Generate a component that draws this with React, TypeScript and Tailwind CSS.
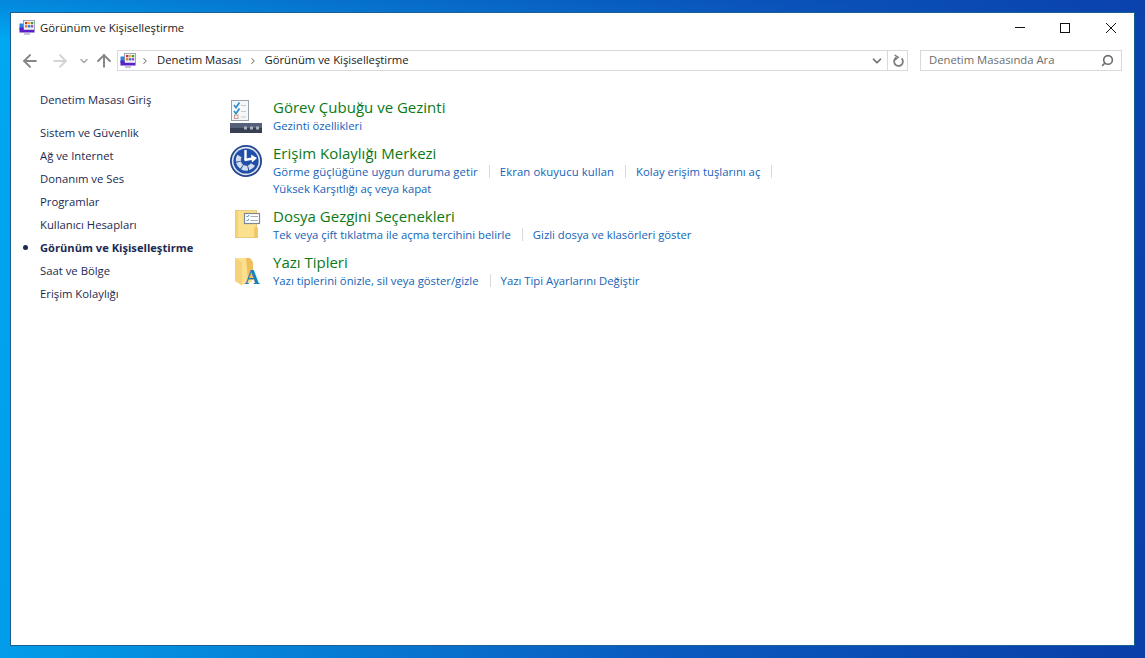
import { ArrowLeft, ArrowRight, ArrowUp, ChevronDown, ChevronRight, Search } from 'lucide-react'

const sideLinks = [
  'Sistem ve Güvenlik',
  'Ağ ve Internet',
  'Donanım ve Ses',
  'Programlar',
  'Kullanıcı Hesapları',
  'Görünüm ve Kişiselleştirme',
  'Saat ve Bölge',
  'Erişim Kolaylığı',
]

const PanelIcon = () => (
  <svg width="16" height="16" viewBox="0 0 16 16" className="shrink-0">
    <path d="M0.5 3.5 H6 V10 H0.5 Z" fill="#2a7fe0" />
    <rect x="4.5" y="0.5" width="11" height="9.5" fill="#eef1f6" stroke="#7a86a0" strokeWidth="0.7" />
    <rect x="6" y="2" width="2.4" height="2.2" fill="#d2302a" />
    <rect x="9" y="2" width="2.4" height="2.2" fill="#e8b21c" />
    <rect x="12" y="2" width="2.2" height="2.2" fill="#3f9c35" />
    <rect x="6" y="5.2" width="2.4" height="2.2" fill="#e0702a" />
    <rect x="9" y="5.2" width="2.4" height="2.2" fill="#2f6fd0" />
    <rect x="12" y="5.2" width="2.2" height="2.2" fill="#9a3fc0" />
    <path d="M0.5 7.5 H4.5 V10 H15.5 V12.5 H0.5 Z" fill="#5a1fc8" />
    <rect x="5" y="13.4" width="6" height="1.2" fill="#9aa4b4" />
  </svg>
)

const TaskbarIcon = () => (
  <svg width="34" height="34" viewBox="0 0 34 34">
    <rect x="2.5" y="1.5" width="17" height="20" fill="#f6f7f9" stroke="#9aa3ad" />
    <path d="M5 6 L7 8.5 L10.5 3.5" fill="none" stroke="#2f8fc8" strokeWidth="1.7" />
    <path d="M5 12 L7 14.5 L10.5 9.5" fill="none" stroke="#2f8fc8" strokeWidth="1.7" />
    <rect x="5.5" y="16" width="3.5" height="3.5" fill="none" stroke="#c69a9a" />
    <path d="M12 6.5 H17 M12 12.5 H17 M12 18 H17" stroke="#c4c9cf" />
    <rect x="1" y="24" width="32" height="5" fill="#566079" />
    <rect x="1" y="29" width="32" height="5" fill="#373f52" />
    <rect x="15" y="27.5" width="3" height="3" fill="#aab2be" />
    <rect x="21" y="27.5" width="3" height="3" fill="#aab2be" />
    <rect x="27" y="27.5" width="3" height="3" fill="#aab2be" />
  </svg>
)

const AccessIcon = () => (
  <svg width="34" height="34" viewBox="0 0 34 34">
    <circle cx="17" cy="16" r="16" fill="#24458f" />
    <circle cx="17" cy="16" r="14.2" fill="#dfe5ef" />
    <circle cx="17" cy="16" r="12.6" fill="#1f4fa8" />
    <path d="M24 19.5 A7.8 7.8 0 1 1 10.5 11" fill="none" stroke="#d5ddea" strokeWidth="5" strokeDasharray="5.5 0.9" />
    <path d="M16.5 5 V15" stroke="#fff" strokeWidth="2.4" />
    <path d="M15.5 15 L24 13.5" stroke="#fff" strokeWidth="2.4" />
    <path d="M22 9.5 L28 13 L23 17.5 Z" fill="#fff" />
  </svg>
)

const FolderOptionsIcon = () => (
  <svg width="34" height="34" viewBox="0 0 34 34">
    <rect x="6.5" y="2.5" width="21" height="27" fill="#fbe08e" stroke="#e8cd80" />
    <rect x="7" y="3" width="2" height="26" fill="#f6d273" />
    <path d="M25 20 Q27 17 29 20 V30 H25 Z" fill="#f2c768" />
    <rect x="15.5" y="5.5" width="15" height="10" fill="#fff" stroke="#7f8791" strokeWidth="1.2" />
    <path d="M17.5 8 L18.5 9 L20 7 M17.5 12 L18.5 13 L20 11" fill="none" stroke="#2f8fc8" />
    <path d="M21.5 8.5 H29 M21.5 12.5 H29" stroke="#a8aeb6" />
  </svg>
)

const FontsIcon = () => (
  <svg width="34" height="34" viewBox="0 0 34 34">
    <path d="M6 4 H18 L23 8 V28 L12 31 L6 27 Z" fill="#fbe08e" />
    <path d="M17 4 H21 L24 8 V26 H19 Z" fill="#eebe5c" />
    <path d="M6 4 L13 8 V31 L6 27 Z" fill="#f7d27a" />
    <text
      x="23"
      y="30"
      textAnchor="middle"
      fontFamily="'Liberation Serif', serif"
      fontWeight="700"
      fontSize="21"
      fill="#1c7fb4"
    >
      A
    </text>
  </svg>
)

const RefreshIcon = () => (
  <svg width="14" height="14" viewBox="0 0 14 14">
    <path d="M5.5 3.6 A4.4 4.4 0 1 0 10.6 4.4" fill="none" stroke="#7d7d7d" strokeWidth="1.8" />
    <path d="M3.6 1 L7.2 3.4 L4 6" fill="none" stroke="#7d7d7d" strokeWidth="1.5" />
  </svg>
)

const Sep = () => <span className="ml-[11px] mr-[10px] inline-block h-[13px] w-px bg-[#d6dbe0] align-[-2px]" />

const Section = ({
  icon,
  title,
  links,
  extra,
  tracked = 0,
}: {
  icon: React.ReactNode
  title: string
  links: string[]
  extra?: string
  tracked?: number
}) => (
  <div className="flex">
    <div className="w-[44px] shrink-0 pt-[2px]">{icon}</div>
    <div>
      <div className="h-[20px] text-[15px] leading-[20px] text-[#0b7a16]">{title}</div>
      <div className="h-[18px] whitespace-nowrap leading-[18px] text-[#1263b8]">
        {links.map((l, i) => (
          <span key={l}>
            <span className={i < tracked ? 'tracking-[0.1px]' : ''}>{l}</span>
            {(i < links.length - 1 || extra) && <Sep />}
          </span>
        ))}
      </div>
      {extra && <div className="h-[17px] leading-[16px] text-[#1263b8]">{extra}</div>}
    </div>
  </div>
)

export default function App() {
  return (
    <div className="h-[658px] w-[1145px] overflow-hidden bg-[linear-gradient(180deg,rgba(10,60,170,0.3)_0%,rgba(10,60,170,0)_6%),linear-gradient(100deg,#00a8f2_0%,#0589dc_25%,#0a5cc0_60%,#0a3ea8_100%)] pb-[12px] pl-[10px] pr-[10px] pt-[12px] font-['Open_Sans','Noto_Sans',sans-serif] text-[11.3px]">
      <div className="flex h-full flex-col border border-[#1c5f8c] bg-white">
        {/* title bar */}
        <div className="flex h-[30px] shrink-0 items-center pl-[8px] text-[#1a1a1a]">
          <PanelIcon />
          <span className="ml-[5px]">Görünüm ve Kişiselleştirme</span>
          <svg width="102" height="16" viewBox="0 0 102 16" className="ml-auto mr-[17px]">
            <path d="M0 7.5 H10" stroke="#111" />
            <rect x="45.5" y="3.5" width="9" height="9" fill="none" stroke="#111" />
            <path d="M91 3 L101 13 M101 3 L91 13" stroke="#111" />
          </svg>
        </div>

        {/* address bar */}
        <div className="mt-[7px] flex h-[21px] shrink-0 items-center">
          <div className="flex w-[106px] shrink-0 items-center pl-[9px]">
            <ArrowLeft size={20} strokeWidth={2.4} className="text-[#858585]" />
            <ArrowRight size={20} strokeWidth={2.4} className="ml-[10px] text-[#d4d4d4]" />
            <ChevronDown size={12} strokeWidth={3} className="ml-[8px] text-[#a9a9a9]" />
            <ArrowUp size={20} strokeWidth={2.4} className="ml-[4px] text-[#858585]" />
          </div>
          <div className="flex h-[21px] w-[791px] shrink-0 items-center border border-[#d9d9d9] pl-[2px] text-[#1a1a1a]">
            <PanelIcon />
            <ChevronRight size={10} strokeWidth={2.5} className="ml-[4px] text-[#777]" />
            <span className="ml-[7px]">Denetim Masası</span>
            <ChevronRight size={10} strokeWidth={2.5} className="ml-[7px] text-[#777]" />
            <span className="ml-[6px]">Görünüm ve Kişiselleştirme</span>
            <ChevronDown size={14} strokeWidth={3} className="ml-auto mr-[3px] text-[#6f6f6f]" />
            <div className="flex h-full w-[20px] items-center justify-center border-l border-[#d9d9d9]">
              <RefreshIcon />
            </div>
          </div>
          <div className="ml-[12px] flex h-[21px] w-[202px] shrink-0 items-center justify-between border border-[#d9d9d9] pl-[8px] pr-[7px] text-[#6d6d6d]">
            <span>Denetim Masasında Ara</span>
            <Search size={13} strokeWidth={3} className="-scale-x-100 text-[#6d6d6d]" />
          </div>
        </div>

        {/* body */}
        <div className="flex min-h-0 flex-1 pt-[17px]">
          <div className="w-[218px] shrink-0 pl-[29px] text-[#1b2a52]">
            <div className="h-[23px] leading-[23px]">Denetim Masası Giriş</div>
            <div className="mt-[10px]">
              {sideLinks.map((l) => {
                const current = l === 'Görünüm ve Kişiselleştirme'
                return (
                  <div key={l} className={`relative h-[23px] leading-[23px] ${current ? 'text-[11.15px] font-bold' : ''}`}>
                    {current && (
                      <span className="absolute left-[-17px] top-[9px] h-[5px] w-[5px] rounded-full bg-[#1b2a52]" />
                    )}
                    {l}
                  </div>
                )
              })}
            </div>
          </div>
          <div className="flex flex-col gap-[8px] pt-[9px]">
            <Section icon={<TaskbarIcon />} title="Görev Çubuğu ve Gezinti" links={['Gezinti özellikleri']} />
            <Section
              icon={<AccessIcon />}
              title="Erişim Kolaylığı Merkezi"
              links={['Görme güçlüğüne uygun duruma getir', 'Ekran okuyucu kullan', 'Kolay erişim tuşlarını aç']}
              extra="Yüksek Karşıtlığı aç veya kapat"
              tracked={2}
            />
            <Section
              icon={<FolderOptionsIcon />}
              title="Dosya Gezgini Seçenekleri"
              links={['Tek veya çift tıklatma ile açma tercihini belirle', 'Gizli dosya ve klasörleri göster']}
            />
            <Section
              icon={<FontsIcon />}
              title="Yazı Tipleri"
              links={['Yazı tiplerini önizle, sil veya göster/gizle', 'Yazı Tipi Ayarlarını Değiştir']}
            />
          </div>
        </div>
      </div>
    </div>
  )
}
